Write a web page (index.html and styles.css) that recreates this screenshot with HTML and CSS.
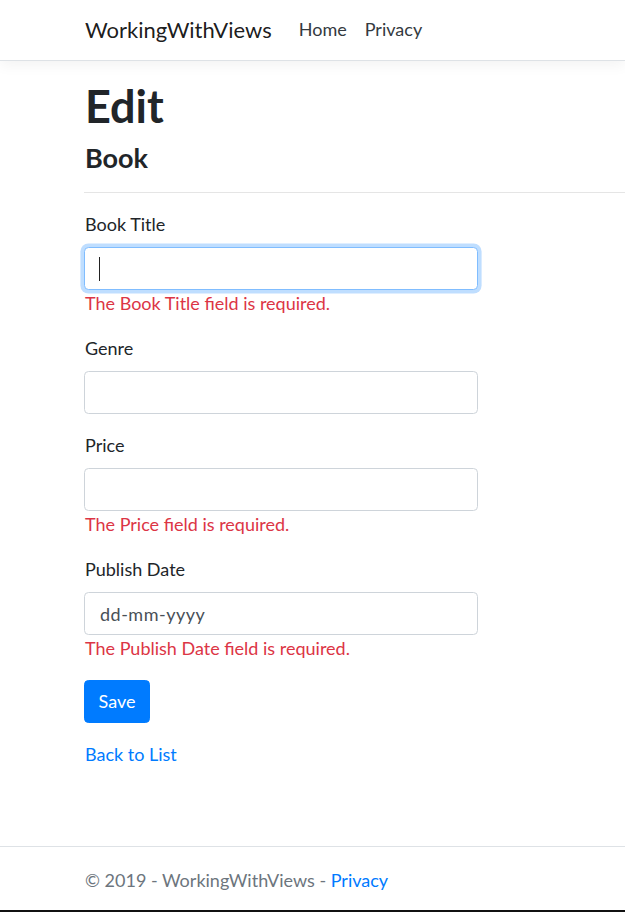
FILE: index.html
```
<!DOCTYPE html>
<html lang="en">
<head>
<meta charset="utf-8">
<title>Edit - WorkingWithViews</title>
<link rel="stylesheet" href="styles.css">
</head>
<body>
<header class="navbar">
  <a class="brand" href="#">WorkingWithViews</a>
  <ul class="nav">
    <li><a class="nav-link" href="#">Home</a></li>
    <li><a class="nav-link" href="#">Privacy</a></li>
  </ul>
</header>
<main class="main">
  <h1 class="title">Edit</h1>
  <h4 class="subtitle">Book</h4>
  <hr class="rule">
  <form class="form">
    <div class="form-group">
      <label class="label">Book Title</label>
      <div class="field">
        <input class="control is-focused" type="text">
        <span class="caret"></span>
      </div>
      <span class="error">The Book Title field is required.</span>
    </div>
    <div class="form-group">
      <label class="label">Genre</label>
      <input class="control" type="text">
    </div>
    <div class="form-group">
      <label class="label">Price</label>
      <input class="control" type="text">
      <span class="error">The Price field is required.</span>
    </div>
    <div class="form-group">
      <label class="label">Publish Date</label>
      <input class="control date" type="text" placeholder="dd-mm-yyyy">
      <span class="error">The Publish Date field is required.</span>
    </div>
    <div class="form-group">
      <button class="btn" type="button">Save</button>
    </div>
  </form>
  <div>
    <a class="link" href="#">Back to List</a>
  </div>
</main>
<footer class="footer">
  © 2019 - WorkingWithViews - <a class="link" href="#">Privacy</a>
</footer>
</body>
</html>
```
FILE: styles.css
```
* { box-sizing: border-box; }

html, body { height: 100%; }

body {
  margin: 0;
  min-height: 912px;
  display: flex;
  flex-direction: column;
  font-family: Lato, "Liberation Sans", sans-serif;
  font-size: 18px;
  line-height: 27px;
  color: #212529;
  background: #fff;
  border-bottom: 2px solid #111;
}

.navbar {
  display: flex;
  align-items: center;
  height: 61px;
  padding: 0 0 2px 85px;
  background: #fff;
  border-bottom: 1px solid #dee2e6;
  box-shadow: 0 4.5px 13.5px rgba(0, 0, 0, 0.05);
}

.brand {
  font-size: 22px;
  line-height: 33px;
  color: rgba(0, 0, 0, 0.9);
  text-decoration: none;
  margin-right: 18px;
}

.nav {
  display: flex;
  list-style: none;
  margin: 0;
  padding: 0;
}

.nav-link {
  display: block;
  padding: 0 9px;
  color: #343a40;
  text-decoration: none;
}

.main {
  padding: 18px 0 0 84px;
}

.title {
  margin: 0 0 9px;
  font-size: 45px;
  line-height: 54px;
  font-weight: 700;
  padding-left: 1px;
}

.subtitle {
  margin: 0 0 9px;
  font-size: 27px;
  line-height: 32px;
  font-weight: 700;
  padding-left: 1px;
}

.rule {
  margin: 18px 0;
  border: 0;
  border-top: 1px solid rgba(0, 0, 0, 0.1);
}

.form {
  width: 394px;
}

.form-group {
  margin-bottom: 18px;
}

.label {
  display: inline-block;
  margin-bottom: 9px;
  padding-left: 1px;
}

.field {
  position: relative;
}

.control {
  display: block;
  width: 100%;
  height: 43px;
  padding: 6.75px 13.5px;
  font: inherit;
  color: #495057;
  background: #fff;
  border: 1px solid #ced4da;
  border-radius: 4.5px;
  outline: none;
}

.control.is-focused {
  border-color: #80bdff;
  box-shadow: 0 0 0 3.6px rgba(0, 123, 255, 0.25);
}

.caret {
  position: absolute;
  left: 15px;
  top: 10px;
  width: 1px;
  height: 24px;
  background: #222;
}

.date {
  padding-left: 15px;
  letter-spacing: 0.5px;
}

.date::placeholder {
  color: #495057;
  opacity: 1;
}

.error {
  display: block;
  color: #dc3545;
  padding-left: 1px;
}

.btn {
  display: inline-block;
  height: 43px;
  padding: 6.75px 13.5px;
  font: inherit;
  color: #fff;
  background: #007bff;
  border: 1px solid #007bff;
  border-radius: 4.5px;
  cursor: pointer;
}

.link {
  color: #007bff;
  text-decoration: none;
  padding-left: 1px;
}

.footer {
  margin-top: auto;
  border-top: 1px solid #dee2e6;
  padding: 3px 0 0 85px;
  line-height: 60px;
  color: #6c757d;
  white-space: nowrap;
}

.footer .link {
  padding-left: 0;
}
```
